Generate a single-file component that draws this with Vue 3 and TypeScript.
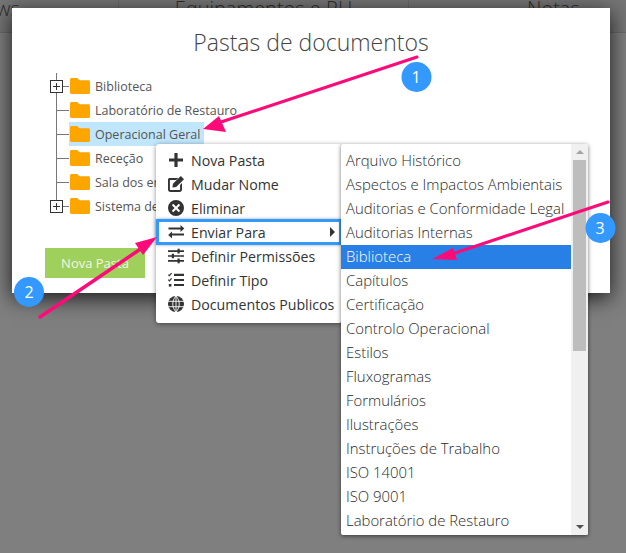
<script setup lang="ts">
interface TreeNode { name: string; expandable: boolean; selected?: boolean }
const tree: TreeNode[] = [
  { name: 'Biblioteca', expandable: true },
  { name: 'Laboratório de Restauro', expandable: false },
  { name: 'Operacional Geral', expandable: false, selected: true },
  { name: 'Receção', expandable: false },
  { name: 'Sala dos empregados', expandable: false },
  { name: 'Sistema de Gestão', expandable: true },
]
const menu = [
  { name: 'Nova Pasta', icon: 'plus' },
  { name: 'Mudar Nome', icon: 'edit' },
  { name: 'Eliminar', icon: 'del' },
  { name: 'Enviar Para', icon: 'swap', active: true },
  { name: 'Definir Permissões', icon: 'sliders' },
  { name: 'Definir Tipo', icon: 'tasks' },
  { name: 'Documentos Publicos', icon: 'globe' },
]
const folders = [
  'Arquivo Histórico', 'Aspectos e Impactos Ambientais', 'Auditorias e Conformidade Legal',
  'Auditorias Internas', 'Biblioteca', 'Capítulos', 'Certificação', 'Controlo Operacional',
  'Estilos', 'Fluxogramas', 'Formulários', 'Ilustrações', 'Instruções de Trabalho',
  'ISO 14001', 'ISO 9001', 'Laboratório de Restauro',
]
</script>

<template>
  <div class="page">
    <div class="tabs">
      <span class="tab tab-a">ws</span>
      <span class="tab tab-b">Equipamentos e RH</span>
      <span class="tab tab-c">Notas</span>
    </div>

    <section class="modal">
      <h1 class="title">Pastas de documentos</h1>
      <ul class="tree">
        <li v-for="n in tree" :key="n.name" class="node">
          <span class="branch">
            <span v-if="n.expandable" class="box"></span>
          </span>
          <span class="label" :class="{ selected: n.selected }">
            <svg class="folder" width="20" height="16" viewBox="0 0 20 16">
              <path d="M1.5 0h5.2c.6 0 1 .2 1.4.7L9.4 2.2h9.1c.8 0 1.5.7 1.5 1.500v10.800c0 .8-.7 1.500-1.500 1.500h-17C.7 16 0 15.300 0 14.500v-13C0 .7.7 0 1.500 0z" fill="#ffa500" />
            </svg>
            <span class="label-text">{{ n.name }}</span>
          </span>
        </li>
      </ul>
      <button class="new-btn">Nova Pasta</button>
    </section>

    <div class="context">
      <div v-for="m in menu" :key="m.name" class="item" :class="{ active: m.active }">
        <svg class="ico" width="18" height="18" viewBox="0 0 18 18" fill="#333">
          <path v-if="m.icon === 'plus'" d="M7.400 2h3.200v5.400H16v3.200h-5.400V16H7.400v-5.400H2V7.400h5.400z" />
          <template v-else-if="m.icon === 'edit'">
            <path d="M2.500 3h8.700L9.300 4.900H3.400c-.3 0-.5.200-.5.500v9.200c0 .3.200.5.500.5h9.200c.3 0 .5-.2.500-.5V9.900L15 8v6.500c0 1.300-1 2.400-2.400 2.400H3.400C2 16.900 1 15.800 1 14.500V5.400C1 4 1.200 3 2.500 3z" />
            <path d="M13.800 1l3.200 3.200-7.800 7.800-3.800.6.600-3.800z" />
          </template>
          <path v-else-if="m.icon === 'del'" fill-rule="evenodd" d="M9 1a8 8 0 1 1 0 16A8 8 0 0 1 9 1zM6.200 4.800L4.800 6.200 7.600 9l-2.800 2.800 1.400 1.400L9 10.400l2.800 2.800 1.400-1.400L10.400 9l2.800-2.800-1.400-1.400L9 7.600z" />
          <template v-else-if="m.icon === 'swap'">
            <path d="M1.500 4.500h12V2l3.800 3.500L13.500 9V6.500h-12z" />
            <path d="M17 10.500H5V8.500l-3.800 3.500L5 15.500V12.500h12z" />
          </template>
          <template v-else-if="m.icon === 'sliders'">
            <path d="M1 3.300h16v1.600H1zM1 8.200h16v1.600H1zM1 13.100h16v1.600H1z" />
            <path d="M10.500 1.800h2.200v4.600h-2.200zM4.800 6.700H7v4.600H4.800zM10.500 11.600h2.200v4.600h-2.200z" />
          </template>
          <template v-else-if="m.icon === 'tasks'">
            <path d="M7 2.800h10v2.100H7zM7 7.900h10v2.100H7zM7 13h10v2.100H7z" />
            <path d="M1.300 3.600l1.100 1.100 2.200-2.500M1.300 8.700l1.100 1.100 2.200-2.500" fill="none" stroke="#333" stroke-width="1.200" />
            <path d="M1.800 13h2.600v2.600H1.800z" />
          </template>
          <template v-else>
            <circle cx="9" cy="9" r="8" />
            <path d="M1 6.300h16M1 11.700h16M9 1v16M9 1C4.700 5.500 4.700 12.500 9 17M9 1c4.300 4.500 4.300 11.500 0 16" fill="none" stroke="#fff" stroke-width=".9" />
          </template>
        </svg>
        <span class="item-text">{{ m.name }}</span>
        <span v-if="m.active" class="caret"></span>
      </div>
    </div>

    <div class="submenu">
      <ul class="sub-list">
        <li v-for="f in folders" :key="f" class="sub-item" :class="{ current: f === 'Biblioteca' }">{{ f }}</li>
      </ul>
      <div class="scroll">
        <span class="arrow up"></span>
        <div class="thumb"></div>
        <span class="arrow down"></span>
      </div>
    </div>

    <svg class="notes" width="626" height="553" viewBox="0 0 626 553">
      <g stroke="#ff0a78" fill="none" stroke-linecap="round">
        <path d="M417 57L218 123" stroke-width="3" />
        <path d="M40 317L142 248" stroke-width="3.500" />
        <path d="M608 202L455 253" stroke-width="3" />
      </g>
      <g fill="#ff0a78">
        <path d="M203 129L219 116 226 132z" />
        <path d="M157 237L135 243 143 255z" />
        <path d="M432 259L453 248 457 260z" />
      </g>
      <g fill="#3399ff">
        <circle cx="416.500" cy="77" r="15" />
        <circle cx="29" cy="292" r="15" />
        <circle cx="600.500" cy="228" r="15" />
      </g>
    </svg>
    <div class="badge b1">1</div>
    <div class="badge b2">2</div>
    <div class="badge b3">3</div>
  </div>
</template>

<style>
html, body { margin: 0; background: #7f7f7f; }
</style>

<style scoped>
.page {
  position: relative;
  width: 626px;
  height: 553px;
  overflow: hidden;
  background: #7f7f7f;
  font-family: "Open Sans", "Noto Sans", sans-serif;
  color: #333;
}
.tabs {
  height: 32px;
  background: #757575;
  border-bottom: 1px solid #6a6a6a;
  display: flex;
  overflow: hidden;
  color: #2c2c2c;
  font-size: 20px;
  font-weight: 300;
  line-height: 20px;
}
.tab {
  display: block;
  white-space: nowrap;
  margin-top: -1px;
  box-sizing: border-box;
  height: 34px;
  border-right: 1px solid #6a6a6a;
}
.tab-a { width: 119px; text-indent: -4px; }
.tab-b { width: 290px; text-align: center; }
.tab-c { flex: 1; padding-left: 118px; border-right: 0; }

.modal {
  position: absolute;
  left: 12px;
  top: 8px;
  width: 598px;
  height: 285px;
  background: #fff;
  box-shadow: 0 5px 20px rgba(0, 0, 0, .8);
}
.title {
  margin: 16px 0 0;
  height: 36px;
  text-align: center;
  font-size: 23px;
  font-weight: 300;
  line-height: 36px;
  color: #444;
}
.tree {
  list-style: none;
  margin: 14px 0 0 38px;
  padding: 0;
}
.node {
  height: 24px;
  display: flex;
  align-items: center;
  position: relative;
}
.node::before {
  content: "";
  position: absolute;
  left: 6px;
  top: -1px;
  bottom: 0;
  width: 1px;
  background: #777;
}
.node:last-child::before { bottom: 12px; }
.branch {
  position: relative;
  width: 19px;
  height: 24px;
  flex: none;
}
.branch::after {
  content: "";
  position: absolute;
  left: 6px;
  width: 13px;
  top: 12px;
  height: 1px;
  background: #777;
}
.box {
  position: absolute;
  z-index: 1;
  left: 0;
  top: 6px;
  width: 11px;
  height: 11px;
  border: 1px solid #333;
  background:
    linear-gradient(#333, #333) center / 7px 1px no-repeat,
    linear-gradient(#333, #333) center / 1px 7px no-repeat,
    #fff;
}
.label {
  display: flex;
  align-items: center;
  height: 24px;
  box-sizing: border-box;
  padding-left: 1px;
  padding-right: 4px;
}
.selected { background: #bfe6fb; }
.folder { flex: none; margin-right: 5px; }
.label-text { color: #555; white-space: nowrap; font-size: 12.500px; }

.new-btn {
  position: absolute;
  left: 33px;
  top: 240px;
  width: 100px;
  height: 30px;
  border: 0;
  padding: 0;
  background: #a0d05c;
  color: #f0f7e4;
  font: inherit;
  font-size: 13px;
}

.context {
  position: absolute;
  left: 156px;
  top: 144px;
  width: 186px;
  height: 179px;
  box-sizing: border-box;
  padding-top: 4px;
  background: #fff;
  border-radius: 3px;
  box-shadow: 0 1px 5px rgba(0, 0, 0, .45);
  font-size: 14.200px;
}
.item {
  position: relative;
  height: 24px;
  display: flex;
  align-items: center;
  padding-left: 11px;
  color: #333;
  white-space: nowrap;
}
.item.active::after {
  content: "";
  position: absolute;
  left: 0;
  right: 0;
  top: -1px;
  bottom: -1px;
  border: 3px solid #3399ff;
  box-shadow: 0 0 3px rgba(0, 0, 0, .35);
}
.ico { flex: none; margin-right: 6px; }
.caret {
  position: absolute;
  left: 174px;
  top: 7px;
  border-left: 5px solid #333;
  border-top: 5px solid transparent;
  border-bottom: 5px solid transparent;
}

.submenu {
  position: absolute;
  left: 341px;
  top: 144px;
  width: 247px;
  height: 391px;
  display: flex;
  background: #fff;
  border-radius: 2px;
  box-shadow: 0 1px 4px rgba(0, 0, 0, .55);
  overflow: hidden;
}
.sub-list {
  list-style: none;
  margin: 0;
  padding: 5px 0 0;
  flex: 1;
  font-size: 14.900px;
  font-weight: 300;
  color: #2a2a2a;
}
.sub-item {
  height: 24px;
  line-height: 22px;
  padding-left: 5px;
  white-space: nowrap;
}
.current { background: #2880e6; color: #fff; }
.scroll {
  width: 17px;
  flex: none;
  background: #f0f0f0;
  display: flex;
  flex-direction: column;
  align-items: center;
}
.thumb {
  width: 13px;
  height: 191px;
  background: #bdbdbd;
  margin-top: 3px;
  margin-bottom: auto;
}
.arrow {
  width: 0;
  height: 0;
  border-left: 4px solid transparent;
  border-right: 4px solid transparent;
  margin: 6px 0;
}
.arrow.up { border-bottom: 4px solid #a3a3a3; margin-bottom: 3px; }
.arrow.down { border-top: 4px solid #505050; }

.notes { position: absolute; left: 0; top: 0; pointer-events: none; }
.badge {
  position: absolute;
  width: 30px;
  height: 30px;
  line-height: 30px;
  text-align: center;
  color: #fff;
  font-size: 16px;
}
.b1 { left: 401px; top: 62px; }
.b2 { left: 14px; top: 277px; }
.b3 { left: 585px; top: 213px; }
</style>
